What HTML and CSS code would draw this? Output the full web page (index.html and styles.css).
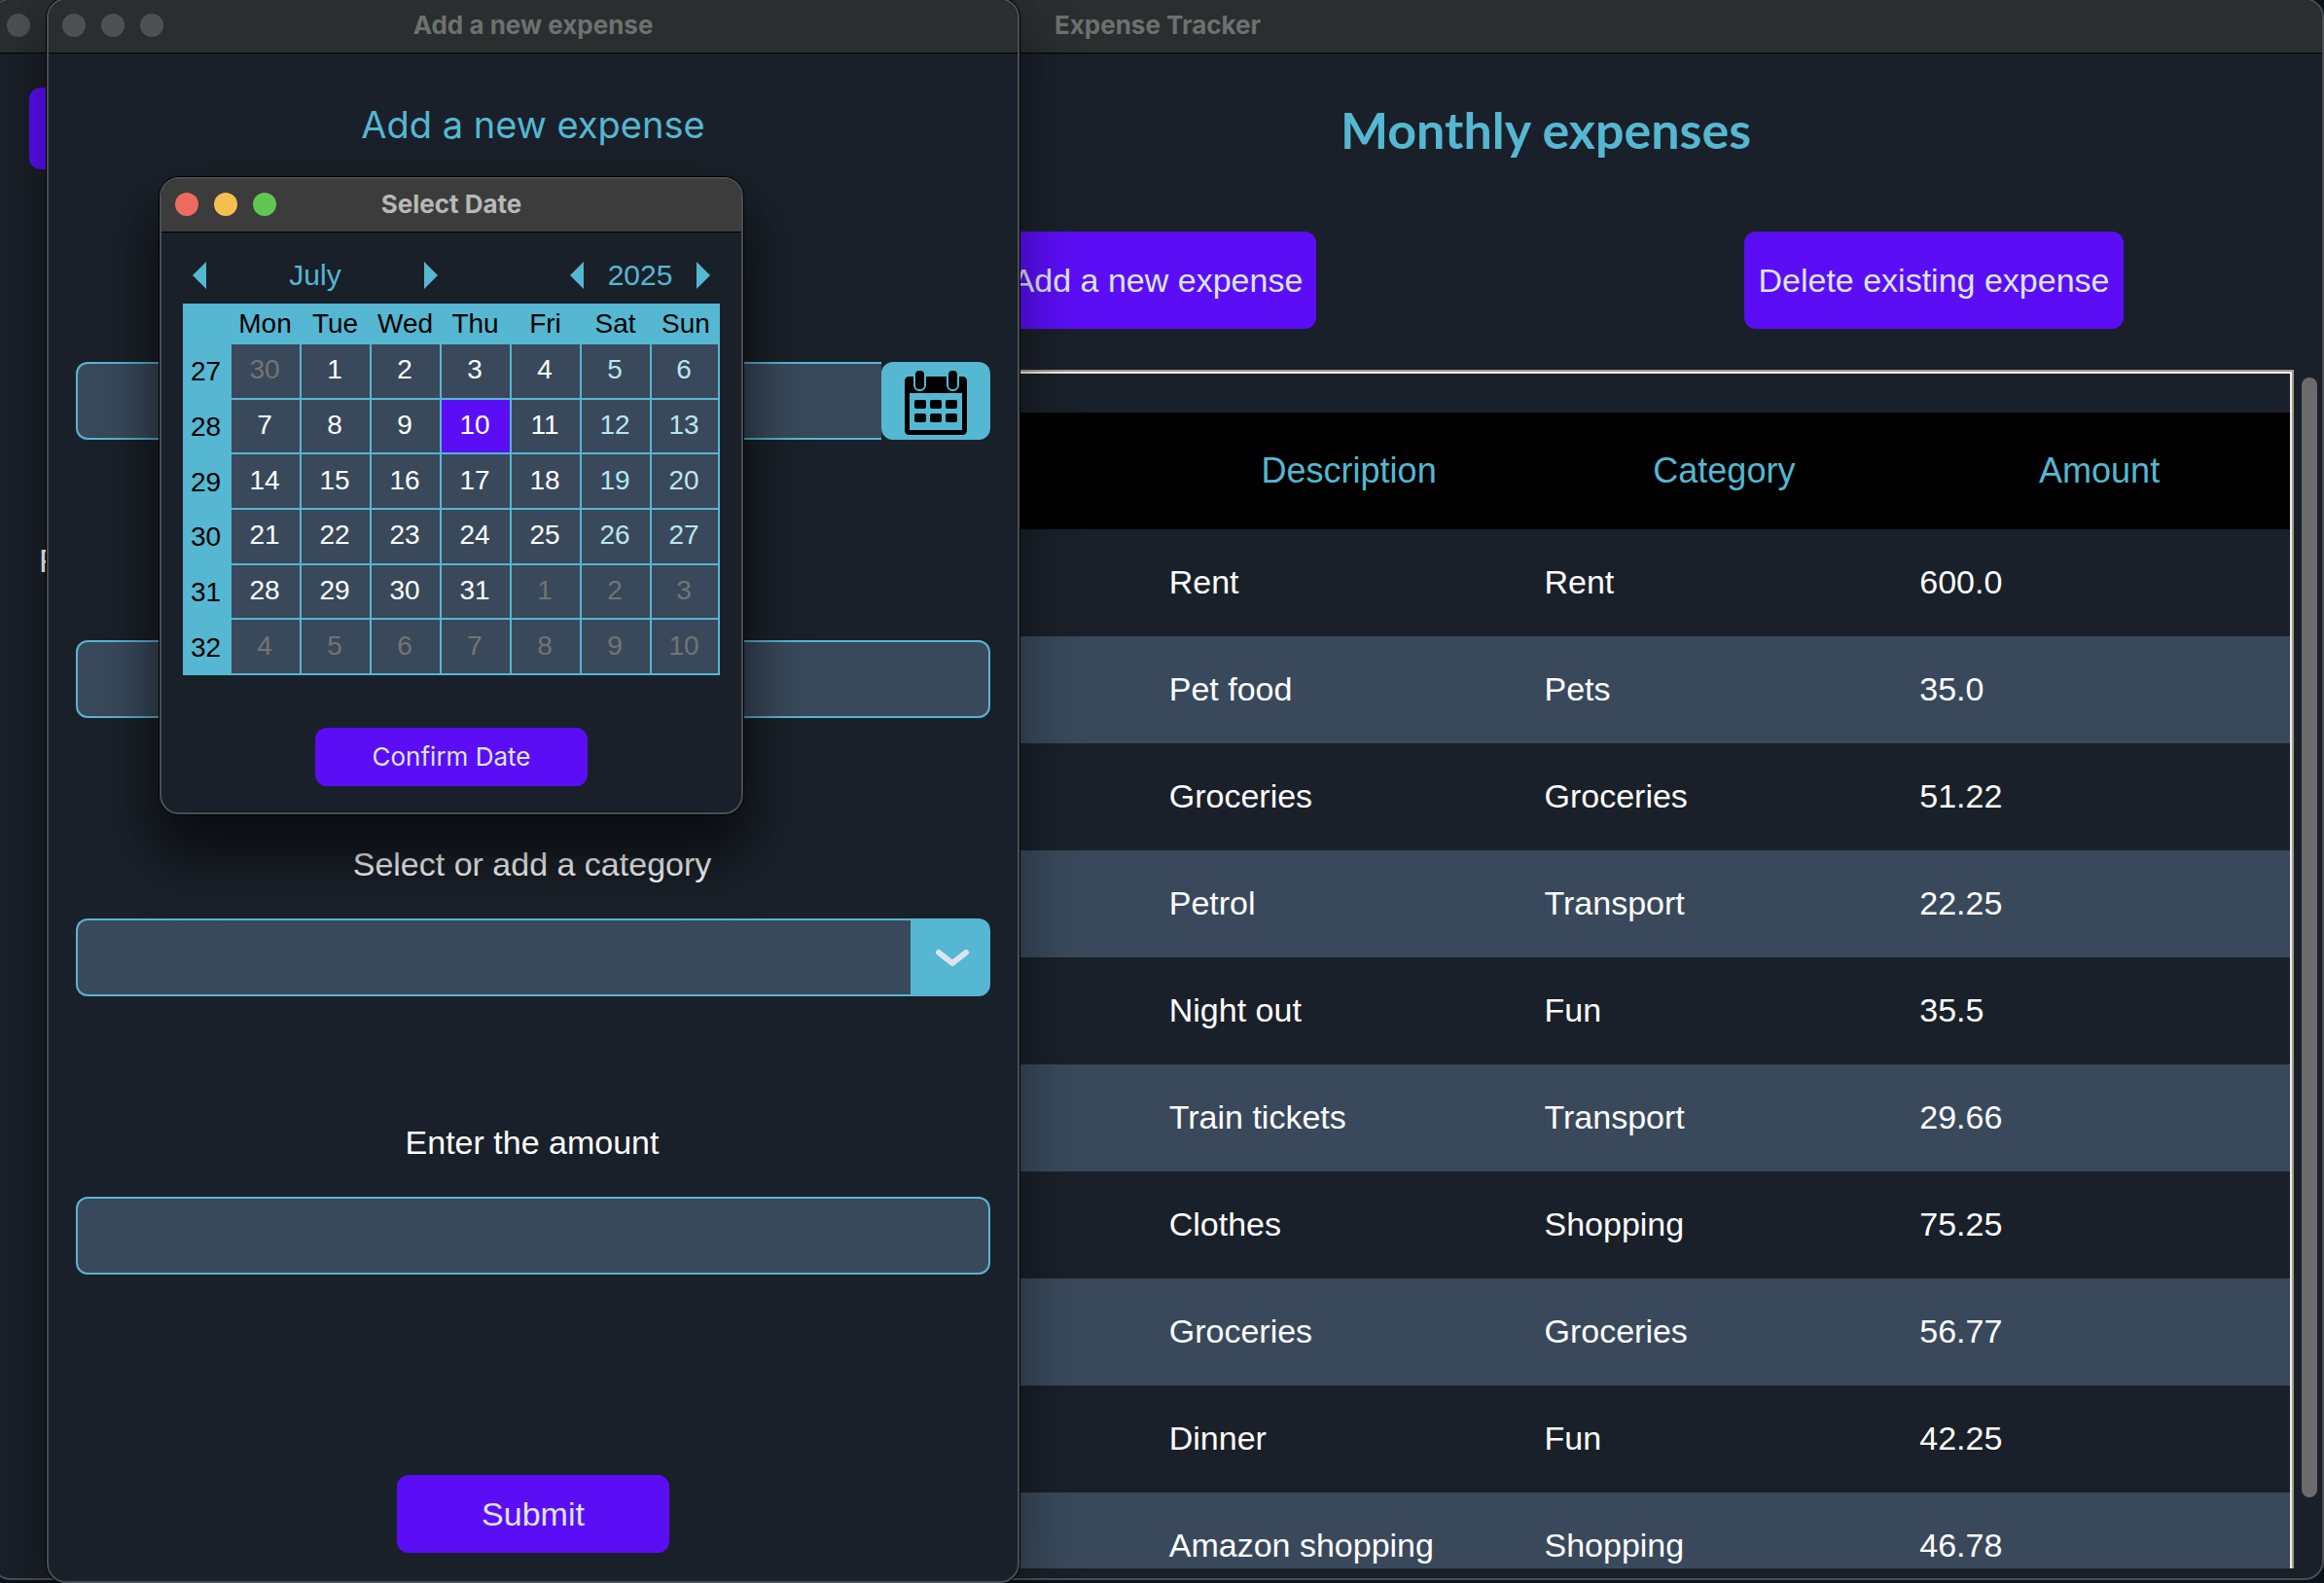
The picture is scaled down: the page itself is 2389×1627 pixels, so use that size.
FILE: index.html
```html
<!DOCTYPE html>
<html lang="en">
<head>
<meta charset="utf-8">
<meta name="viewport" content="width=device-width, initial-scale=1">
<title>Expense Tracker</title>
<link rel="stylesheet" href="styles.css">
</head>
<body>
<div class="desktop">

  <main class="window window-main">
    <header class="titlebar">
      <div class="lights"><span class="light"></span><span class="light"></span><span class="light"></span></div>
      <h1 class="title">Expense Tracker</h1>
    </header>
    <div class="tracker">
      <aside class="sidebar">
        <button class="btn sidebar-btn" type="button" aria-label="Menu"></button>
        <p class="sidebar-label">F</p>
      </aside>
      <section class="content">
        <h2 class="heading">Monthly expenses</h2>
        <div class="actions">
          <div><button class="btn btn-large" type="button">Add a new expense</button></div>
          <div><button class="btn btn-large" type="button">Delete existing expense</button></div>
        </div>
        <div class="list">
          <div class="sheet">
            <table class="expenses">
              <thead>
                <tr><th></th><th>Description</th><th>Category</th><th>Amount</th></tr>
              </thead>
              <tbody>
                <tr><td></td><td>Rent</td><td>Rent</td><td>600.0</td></tr>
                <tr><td></td><td>Pet food</td><td>Pets</td><td>35.0</td></tr>
                <tr><td></td><td>Groceries</td><td>Groceries</td><td>51.22</td></tr>
                <tr><td></td><td>Petrol</td><td>Transport</td><td>22.25</td></tr>
                <tr><td></td><td>Night out</td><td>Fun</td><td>35.5</td></tr>
                <tr><td></td><td>Train tickets</td><td>Transport</td><td>29.66</td></tr>
                <tr><td></td><td>Clothes</td><td>Shopping</td><td>75.25</td></tr>
                <tr><td></td><td>Groceries</td><td>Groceries</td><td>56.77</td></tr>
                <tr><td></td><td>Dinner</td><td>Fun</td><td>42.25</td></tr>
                <tr><td></td><td>Amazon shopping</td><td>Shopping</td><td>46.78</td></tr>
              </tbody>
            </table>
          </div>
          <div class="scroll"><div class="thumb"></div></div>
        </div>
      </section>
    </div>
  </main>

  <section class="window window-add">
    <header class="titlebar">
      <div class="lights"><span class="light"></span><span class="light"></span><span class="light"></span></div>
      <h2 class="title">Add a new expense</h2>
    </header>
    <form class="form">
      <h3 class="form-heading">Add a new expense</h3>
      <div class="field">
        <div class="combo">
          <input class="input" id="date" type="text" aria-label="Date">
          <button class="date-btn" type="button" aria-label="Pick a date">
            <svg width="66" height="66" viewBox="0 0 66 66" aria-hidden="true">
              <path fill="#000" fill-rule="evenodd" d="M6 6H60Q65 6 65 11V61Q65 66 60 66H6Q1 66 1 61V11Q1 6 6 6ZM6 23V61H60V23Z"/>
              <g fill="#000" stroke="#55b7d1" stroke-width="2"><rect x="11" y="-1" width="11" height="21" rx="5"/><rect x="45" y="-1" width="11" height="21" rx="5"/></g>
              <g fill="#000"><rect x="11" y="30" width="12" height="9" rx="2"/><rect x="27" y="30" width="12" height="9" rx="2"/><rect x="43" y="30" width="12" height="9" rx="2"/><rect x="11" y="44" width="12" height="9" rx="2"/><rect x="27" y="44" width="12" height="9" rx="2"/><rect x="43" y="44" width="12" height="9" rx="2"/></g>
            </svg>
          </button>
        </div>
      </div>
      <div class="field">
        <input class="input" id="description" type="text" aria-label="Description">
      </div>
      <div class="field">
        <label class="label" for="category">Select or add a category</label>
        <div class="combo">
          <input class="input" id="category" type="text">
          <button class="drop-btn" type="button" aria-label="Show categories">
            <svg width="36" height="22" viewBox="0 0 36 22" aria-hidden="true"><path d="M4 6L18 17L32 6" fill="none" stroke="#dce4ee" stroke-width="6" stroke-linecap="round" stroke-linejoin="round"/></svg>
          </button>
        </div>
      </div>
      <div class="field">
        <label class="label" for="amount">Enter the amount</label>
        <input class="input" id="amount" type="text">
      </div>
      <button class="btn submit" type="submit">Submit</button>
    </form>
  </section>

  <section class="window window-date">
    <header class="titlebar">
      <div class="lights"><span class="light red"></span><span class="light yellow"></span><span class="light green"></span></div>
      <h2 class="title">Select Date</h2>
    </header>
    <div class="picker">
      <div class="picker-nav">
        <div class="stepper stepper-month">
          <button class="arrow prev" type="button" aria-label="Previous month"></button>
          <span>July</span>
          <button class="arrow next" type="button" aria-label="Next month"></button>
        </div>
        <div class="stepper stepper-year">
          <button class="arrow prev" type="button" aria-label="Previous year"></button>
          <span>2025</span>
          <button class="arrow next" type="button" aria-label="Next year"></button>
        </div>
      </div>
      <table class="calendar">
        <thead>
          <tr><th class="week"></th><th>Mon</th><th>Tue</th><th>Wed</th><th>Thu</th><th>Fri</th><th>Sat</th><th class="last">Sun</th></tr>
        </thead>
        <tbody>
          <tr><th>27</th><td class="other">30</td><td>1</td><td>2</td><td>3</td><td>4</td><td class="rest">5</td><td class="rest">6</td></tr>
          <tr><th>28</th><td>7</td><td>8</td><td>9</td><td class="selected">10</td><td>11</td><td class="rest">12</td><td class="rest">13</td></tr>
          <tr><th>29</th><td>14</td><td>15</td><td>16</td><td>17</td><td>18</td><td class="rest">19</td><td class="rest">20</td></tr>
          <tr><th>30</th><td>21</td><td>22</td><td>23</td><td>24</td><td>25</td><td class="rest">26</td><td class="rest">27</td></tr>
          <tr><th>31</th><td>28</td><td>29</td><td>30</td><td>31</td><td class="other">1</td><td class="other">2</td><td class="other">3</td></tr>
          <tr><th>32</th><td class="other">4</td><td class="other">5</td><td class="other">6</td><td class="other">7</td><td class="other">8</td><td class="other">9</td><td class="other">10</td></tr>
        </tbody>
      </table>
      <button class="btn confirm" type="button">Confirm Date</button>
    </div>
  </section>

</div>
</body>
</html>
```
FILE: styles.css
```css
:root {
  --bg: #1a2029;
  --field: #39495b;
  --cyan: #55b7d1;
  --purple: #5b0ef5;
  --light-text: #dce4ee;
}

* { box-sizing: border-box; }

body {
  margin: 0;
  background: #0b1218;
  color: #fff;
  font: 34px/40px "Liberation Sans", Arial, sans-serif;
}

h1, h2, h3, p { margin: 0; font-weight: 400; }

button { font: inherit; border: 0; padding: 0; }

.desktop {
  position: relative;
  height: 100vh;
  overflow: hidden;
}

/* Windows */
.window {
  position: absolute;
  display: flex;
  flex-direction: column;
  overflow: hidden;
  background: var(--bg);
  border: 2px solid #4a4e54;
  border-radius: 20px;
}

.window-main { top: -2px; left: -9px; right: 0; bottom: 3px; }

.window-add {
  top: -2px;
  left: 48px;
  bottom: 0;
  width: 1000px;
  box-shadow: 0 0 0 1px #000, 0 16px 60px rgba(0, 0, 0, .45);
}

.window-date {
  top: 182px;
  left: 164px;
  width: 600px;
  box-shadow: 0 0 0 1px #000, 0 36px 60px 4px rgba(0, 0, 0, .65);
}

.titlebar {
  display: grid;
  grid-template-columns: 1fr auto 1fr;
  align-items: center;
  flex: none;
  height: 55px;
  padding: 0 14px 2px;
  background: #2b2e2f;
  border-bottom: 1px solid #000;
}

.window-date .titlebar { background: #3b3c3b; }

.lights { display: flex; gap: 16px; }

.light {
  width: 24px;
  height: 24px;
  border-radius: 50%;
  background: #4f5051;
}

.red { background: #ed6a5e; }
.yellow { background: #f5bf4f; }
.green { background: #61c554; }

.title {
  font: 700 26px/30px Inter, sans-serif;
  color: #6e7071;
}

.window-date .title { color: #b7b8b7; }

.btn {
  background: var(--purple);
  color: var(--light-text);
  border-radius: 12px;
}

/* Tracker */
.tracker {
  display: grid;
  grid-template-columns: 1fr 2fr;
  flex: 1;
  min-height: 0;
}

.sidebar { padding: 35px 37px; }

.sidebar-btn { display: block; width: 100%; height: 84px; }

.sidebar-label { margin-top: 382px; padding-left: 10px; }

.content {
  display: flex;
  flex-direction: column;
  min-height: 0;
  padding: 48px 0 10px;
}

.heading {
  font: 700 52px/60px Lato, sans-serif;
  color: var(--cyan);
  text-align: center;
}

.actions {
  display: grid;
  grid-template-columns: 1fr 1fr;
  margin: 75px 0 42px;
  text-align: center;
}

.actions > div { display: grid; justify-content: center; }

.btn-large { height: 100px; padding: 0 14px; }

.list {
  display: flex;
  flex: 1;
  min-height: 0;
  padding-left: 16px;
}

.sheet {
  flex: 1;
  overflow: hidden;
  padding: 42px 2px 0;
  border: 2px solid #a39a8f;
  border-bottom: 0;
  box-shadow: inset 2px 0 #f0ebe6, inset -2px 0 #f0ebe6, inset 0 2px #f0ebe6;
}

.expenses {
  width: 100%;
  table-layout: fixed;
  border-collapse: collapse;
}

.expenses th {
  height: 120px;
  padding: 0 6px 0 0;
  background: #000;
  color: var(--cyan);
  font-size: 36px;
  font-weight: 400;
}

.expenses td { height: 110px; padding: 0 5px 2px; }

.expenses tbody tr:nth-child(even) { background: var(--field); }

.scroll { padding: 8px 5px 0 8px; }

.thumb {
  width: 16px;
  height: 94%;
  border-radius: 8px;
  background: #6b6b6b;
}

/* Form */
.form {
  display: flex;
  flex-direction: column;
  flex: 1;
  padding: 48px 28px 29px;
}

.form-heading {
  margin-bottom: 147px;
  font: 400 38px/50px Inter, sans-serif;
  color: var(--cyan);
  text-align: center;
}

.field {
  display: flex;
  flex-direction: column;
  justify-content: flex-end;
  height: 206px;
  margin-bottom: 80px;
}

.field:first-of-type { height: 152px; }

.label { margin-bottom: 36px; padding-right: 2px; text-align: center; }

.combo { display: flex; }

.input {
  min-width: 0;
  width: 100%;
  height: 80px;
  padding: 0 16px;
  background: var(--field);
  border: 2px solid var(--cyan);
  border-radius: 12px;
  color: #fff;
  font: inherit;
}

.combo .input {
  flex: 1;
  border-right: 0;
  border-radius: 12px 0 0 12px;
}

.date-btn, .drop-btn {
  display: grid;
  place-items: center;
  height: 80px;
  background: var(--cyan);
}

.date-btn { width: 112px; padding-top: 4px; border-radius: 12px; }
.date-btn svg { overflow: visible; }
.drop-btn { width: 82px; padding-left: 4px; border-radius: 0 12px 12px 0; }

.submit {
  align-self: center;
  width: 280px;
  height: 80px;
  margin-top: auto;
}

/* Date picker */
.picker {
  display: flex;
  flex-direction: column;
  align-items: center;
  padding: 24px 22px 27px;
}

.picker-nav {
  display: flex;
  justify-content: space-between;
  width: 100%;
  padding: 0 10px;
  margin-bottom: 9px;
  font-size: 30px;
  color: var(--cyan);
}

.stepper {
  display: flex;
  align-items: center;
  justify-content: space-between;
}

.stepper-month { width: 252px; }
.stepper-year { width: 144px; }

.arrow {
  width: 14px;
  height: 28px;
  background: var(--cyan);
}

.prev { clip-path: polygon(100% 0, 100% 100%, 0 50%); }
.next { clip-path: polygon(0 0, 0 100%, 100% 50%); }

.calendar {
  width: 100%;
  height: 382px;
  table-layout: fixed;
  border-collapse: separate;
  border-spacing: 0;
  background: var(--cyan);
  font-size: 28px;
  line-height: 32px;
  text-align: center;
}

.calendar th {
  padding: 0 3px 0 0;
  color: #000;
  font-weight: 400;
}

.calendar thead th { height: 42px; }

.calendar .week { width: 50px; }
.calendar .last { width: 70px; padding: 0; }

.calendar td {
  padding: 0 2px 2px 0;
  background: var(--field);
  border: solid var(--cyan);
  border-width: 0 2px 2px 0;
}

.calendar .rest { color: #b9e6ef; }
.calendar .other { color: #737373; }
.calendar .selected { background: var(--purple); }

.confirm {
  width: 280px;
  height: 60px;
  margin-top: 54px;
  font: 26px/32px Inter, sans-serif;
}
```
